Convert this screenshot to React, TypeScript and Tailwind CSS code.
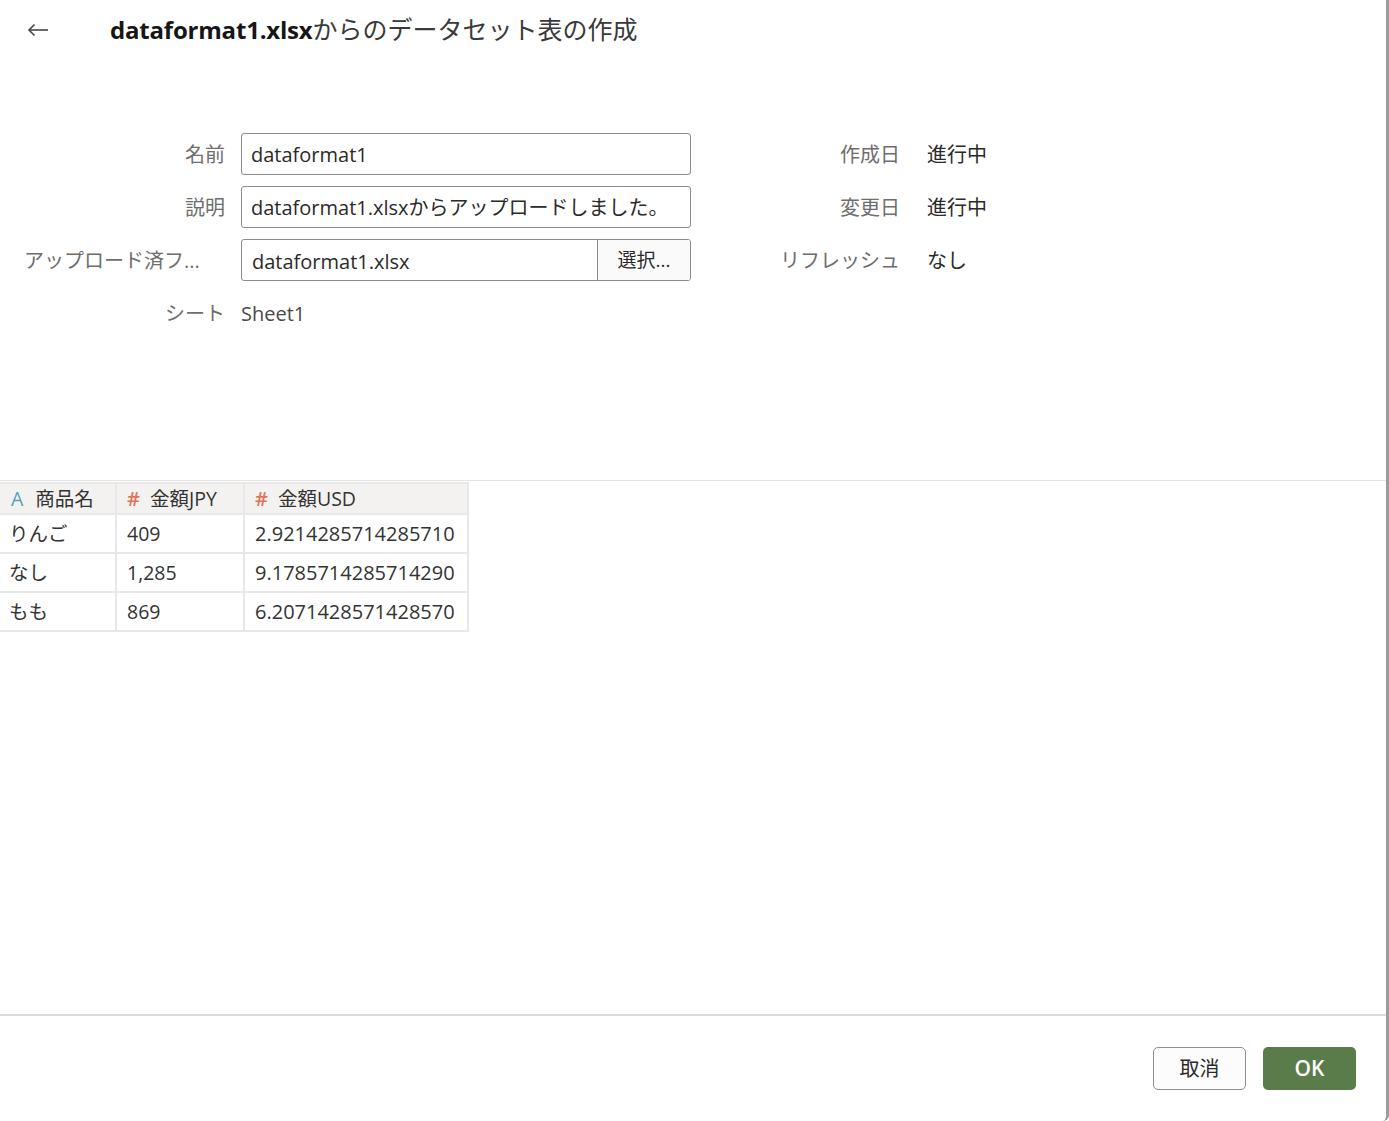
import React from 'react'

const font = "font-['Open_Sans','Noto_Sans_CJK_JP',sans-serif]"

const rows = [
  { name: 'りんご', jpy: '409', usd: '2.9214285714285710' },
  { name: 'なし', jpy: '1,285', usd: '9.1785714285714290' },
  { name: 'もも', jpy: '869', usd: '6.2071428571428570' },
]

function Field({ label, title, children }: { label: string; title?: string; children: React.ReactNode }) {
  return (
    <div className="flex items-center h-[42px]">
      <div title={title} className={`w-[201px] whitespace-nowrap text-[20px] text-[#6e6e6e] pt-[2px] ${title ? 'text-left' : 'text-right'}`}>{label}</div>
      <div className="ml-[16px] flex items-center">{children}</div>
    </div>
  )
}

function Info({ label, value }: { label: string; value: string }) {
  return (
    <div className="flex items-center h-[42px] pt-[2px]">
      <div className="w-[140px] text-right text-[20px] text-[#6e6e6e]">{label}</div>
      <div className="ml-[27px] text-[20px] text-[#2a2a2a]">{value}</div>
    </div>
  )
}

export default function App() {
  return (
    <div className={`${font} w-[1389px] h-[1121px] bg-white flex flex-col border-r-[3px] border-[#9c9c9c] rounded-br-[6px] overflow-hidden`}>
      {/* header */}
      <div className="h-[60px] flex items-center shrink-0">
        <div className="w-[110px] pl-[27px]">
          <svg width="22" height="14" viewBox="0 0 22 14" fill="none" stroke="#444" strokeWidth="1.6">
            <path d="M2 7h19" />
            <path d="M7.5 1.5L2 7l5.5 5.5" />
          </svg>
        </div>
        <h1 className="text-[25px] text-[#161616] tracking-[-0.3px]">
          <span className="font-bold text-[24px] tracking-[-0.2px]">dataformat1.xlsx</span>
          <span className="text-[#3a3a3a] tracking-normal">からのデータセット表の作成</span>
        </h1>
      </div>

      {/* form */}
      <div className="h-[421px] shrink-0 pt-[73px] flex border-b border-[#e3e3e3]">
        <div className="pl-[24px] flex flex-col gap-[11px]">
          <Field label="名前">
            <div className="w-[450px] h-[42px] border border-[#8c8c8c] rounded-[3px] px-[9px] pt-[2px] flex items-center text-[20px] text-[#2a2a2a]">dataformat1</div>
          </Field>
          <Field label="説明">
            <div className="w-[450px] h-[42px] border border-[#8c8c8c] rounded-[3px] px-[9px] pt-[2px] flex items-center text-[20px] text-[#2a2a2a] whitespace-nowrap overflow-hidden">dataformat1.xlsxからアップロードしました。</div>
          </Field>
          <Field label="アップロード済フ..." title="アップロード済ファイル">
            <div className="w-[450px] h-[42px] border border-[#8c8c8c] rounded-[3px] flex text-[20px] text-[#2a2a2a] overflow-hidden">
              <div className="flex-1 px-[10px] flex items-center pt-[3px]">dataformat1.xlsx</div>
              <div className="w-[93px] border-l border-[#8c8c8c] bg-[#fafafa] flex items-center justify-center text-[19px]">選択...</div>
            </div>
          </Field>
          <Field label="シート">
            <div className="text-[20px] text-[#4a4a4a] pt-[2px]">Sheet1</div>
          </Field>
        </div>
        <div className="ml-[69px] flex flex-col gap-[11px]">
          <Info label="作成日" value="進行中" />
          <Info label="変更日" value="進行中" />
          <Info label="リフレッシュ" value="なし" />
        </div>
      </div>

      {/* table */}
      <div className="flex-1 pt-[1px]">
        <table className="border-collapse text-[19.5px] text-[#333] leading-[1.3]">
          <thead>
            <tr className="bg-[#f3f2f1] h-[31px]">
              <th className="w-[116px] border-2 border-l-0 border-[#e8e8e8] pl-[11px] pr-[6px] text-left font-normal whitespace-nowrap">
                <span className="text-[#5a9fb8] mr-[12px]">A</span>商品名
              </th>
              <th className="w-[128px] border-2 border-[#e8e8e8] px-[10px] text-left font-normal whitespace-nowrap">
                <span className="text-[#e0735a] font-semibold text-[20px] mr-[10px]">#</span>金額JPY
              </th>
              <th className="w-[224px] border-2 border-[#e8e8e8] px-[10px] text-left font-normal whitespace-nowrap">
                <span className="text-[#e0735a] font-semibold text-[20px] mr-[10px]">#</span>金額USD
              </th>
            </tr>
          </thead>
          <tbody>
            {rows.map(r => (
              <tr key={r.name} className="h-[39px]">
                <td className="border-2 border-l-0 border-[#e8e8e8] px-[9px]">{r.name}</td>
                <td className="border-2 border-[#e8e8e8] px-[10px]">{r.jpy}</td>
                <td className="border-2 border-[#e8e8e8] px-[10px] text-[20px]">{r.usd}</td>
              </tr>
            ))}
          </tbody>
        </table>
      </div>

      {/* footer */}
      <div className="h-[107px] shrink-0 border-t-2 border-[#dcdcdc] flex items-center justify-end gap-[17px] pr-[30px]">
        <button className="w-[93px] h-[43px] border border-[#8f8f8f] rounded-[5px] bg-[#fcfcfc] text-[20px] text-[#2a2a2a]">取消</button>
        <button className="w-[93px] h-[43px] rounded-[5px] bg-[#5a7b4a] text-[21px] text-white font-semibold">OK</button>
      </div>
    </div>
  )
}
